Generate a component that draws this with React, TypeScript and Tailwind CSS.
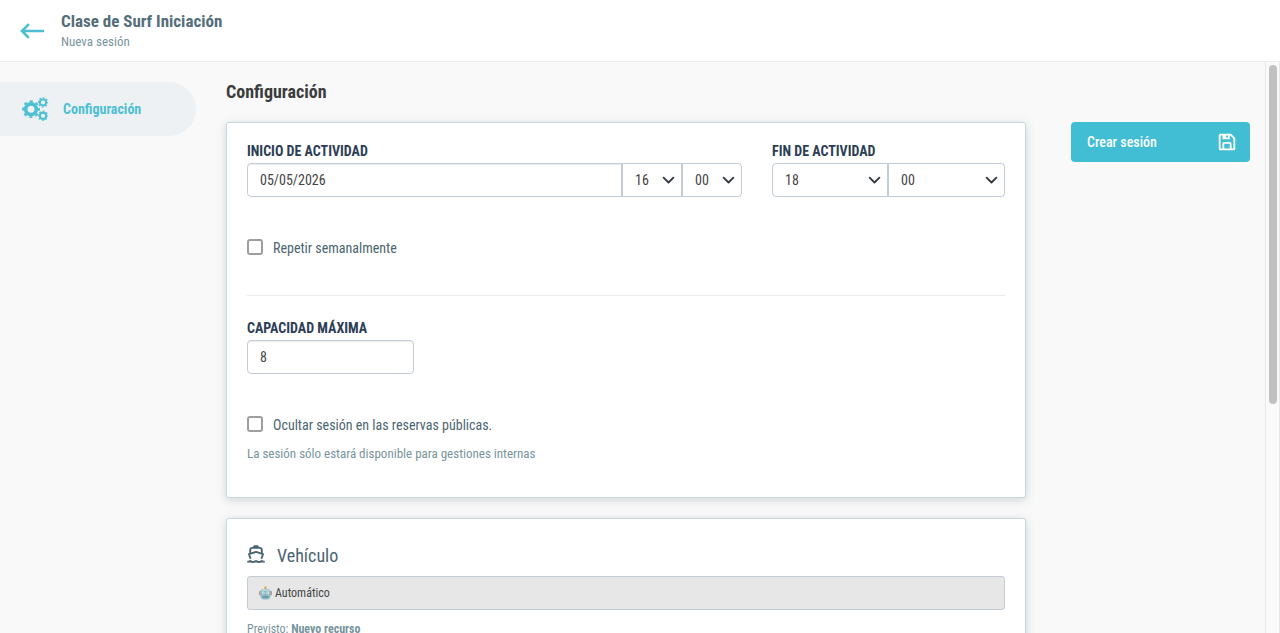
import type { ReactNode } from 'react'
import { BiSave } from 'react-icons/bi'

function ArrowLeft() {
  return (
    <svg width="24" height="16" viewBox="0 0 24 16" fill="none" stroke="#4dbfd3" strokeWidth="2.6">
      <path d="M24 8H2M8.8 1.2 2 8l6.8 6.8" />
    </svg>
  )
}

// Ring plus dashed outer circle; each dash is a tooth
function Gear({ cx, cy, r, hole, teeth }: { cx: number; cy: number; r: number; hole: number; teeth: number }) {
  const body = r * 0.78
  const tooth = (r + body) / 2
  const step = (Math.PI * 2 * tooth) / teeth
  return (
    <g fill="none" stroke="currentColor">
      <circle cx={cx} cy={cy} r={(body + hole) / 2} strokeWidth={body - hole + 0.3} />
      <circle
        cx={cx}
        cy={cy}
        r={tooth}
        strokeWidth={r - body}
        strokeDasharray={`${step * 0.5} ${step * 0.5}`}
        strokeDashoffset={step * 0.25}
      />
    </g>
  )
}

function Cogs() {
  return (
    <svg width="27" height="25" viewBox="0 0 27 25">
      <Gear cx={9} cy={12.2} r={8.9} hole={3.7} teeth={8} />
      <Gear cx={21} cy={5.4} r={5.2} hole={2.3} teeth={8} />
      <Gear cx={21} cy={18.8} r={5.2} hole={2.3} teeth={8} />
    </svg>
  )
}

function Boat() {
  return (
    <svg width="18" height="18" viewBox="0 0 18 18" fill="none" stroke="currentColor" strokeWidth="1.9">
      <path d="M6.4 2.4 7.3.9h3.4l.9 1.5" fill="currentColor" strokeWidth="1.2" />
      <path d="M3.2 8V5c0-1.2.9-2.1 2.1-2.1h7.4c1.2 0 2.1.9 2.1 2.1v3" />
      <path d="M3.6 13.8 2 9.2l7-2.3 7 2.3-1.6 4.6" strokeLinejoin="round" />
      <path d="M.3 16.8c1.3 0 2-.2 2.9-.8 1.6 1.1 4.2 1.1 5.8 0 1.6 1.1 4.2 1.1 5.8 0 .9.6 1.6.8 2.9.8" />
    </svg>
  )
}

function Robot() {
  return (
    <svg width="13" height="14" viewBox="0 0 13 14">
      <rect x="0" y="5" width="2.4" height="4.2" rx="1" fill="#c98f86" />
      <rect x="10.6" y="5" width="2.4" height="4.2" rx="1" fill="#c98f86" />
      <circle cx="6.5" cy="1.2" r="1.1" fill="#eeb04e" />
      <path d="M4.6 3.2 5.6 2h1.8l1 1.2z" fill="#a3adb0" />
      <path d="M1.2 5.2C1.6 3.7 3 2.9 4.4 2.9h4.2c1.4 0 2.8.8 3.2 2.3v4c0 2.5-1.6 4.2-3.8 4.2H5c-2.2 0-3.8-1.7-3.8-4.2z" fill="#8fbdc5" />
      <path d="M1.4 4.9C1.9 3.6 3 2.9 4.4 2.9h4.2c1.4 0 2.5.7 3 2z" fill="#bccfd2" />
      <circle cx="4.2" cy="6.9" r="1.4" fill="#e3f2f4" />
      <circle cx="8.8" cy="6.9" r="1.4" fill="#e3f2f4" />
      <circle cx="4.2" cy="6.9" r="0.6" fill="#5ba5b2" />
      <circle cx="8.8" cy="6.9" r="0.6" fill="#5ba5b2" />
      <path d="m6.5 7.6.6 1.1H5.9z" fill="#c98077" />
      <rect x="3.5" y="10.2" width="6" height="1.6" rx="0.8" fill="#5f909b" />
    </svg>
  )
}

function Label({ children }: { children: ReactNode }) {
  return <div className="h-6 text-sm leading-6 font-bold text-[#2c3e55] uppercase">{children}</div>
}

function Select({ value, className }: { value: string; className: string }) {
  return (
    <div
      className={`flex h-[34px] items-center justify-between border border-[#c3ccd6] bg-white pr-1.5 pl-3 text-sm text-[#444] ${className}`}
    >
      <span>{value}</span>
      <svg width="13" height="13" viewBox="0 0 16 16" fill="none" stroke="#343a40" strokeWidth="2.3">
        <path d="m2 4.5 6 6 6-6" strokeLinecap="round" strokeLinejoin="round" />
      </svg>
    </div>
  )
}

function Checkbox({ label }: { label: string }) {
  return (
    <label className="flex items-center gap-2.5 text-sm text-[#4b6570]">
      <span className="size-4 rounded-[3px] border-2 border-[#9e9e9e] bg-white" />
      <span className="relative top-px">{label}</span>
    </label>
  )
}

function Card({ children, className = '' }: { children: ReactNode; className?: string }) {
  return (
    <section
      className={`w-[800px] shrink-0 rounded-[3px] border border-[#cbd5e0] bg-white px-5 shadow-[0_2px_10px_rgba(84,110,110,0.25)] ${className}`}
    >
      {children}
    </section>
  )
}

export default function App() {
  return (
    <div className="flex h-[633px] w-[1280px] flex-col overflow-hidden bg-[#f9f9f9] font-['Roboto_Condensed',Roboto,sans-serif] font-stretch-condensed">
      <header className="flex h-[62px] shrink-0 items-center border-b border-[#ececec] bg-white pl-5">
        <ArrowLeft />
        <div className="ml-[17px]">
          <h1 className="-mt-px mb-px text-[17px] leading-[22px] font-bold text-[#546e7a]">Clase de Surf Iniciación</h1>
          <p className="text-[13px] leading-[18px] text-[#78949c]">Nueva sesión</p>
        </div>
      </header>

      <div className="flex min-h-0 flex-1">
        <aside className="w-[196px] shrink-0 pt-5">
          <div className="flex h-[54px] items-center rounded-r-full bg-[#edf1f4] pl-[22px] text-[#4dbfd3]">
            <Cogs />
            <span className="ml-3.5 text-sm font-bold">Configuración</span>
          </div>
        </aside>

        <main className="ml-[30px] flex w-[800px] flex-col pt-[17px]">
          <h2 className="mb-[17px] text-lg leading-[26px] font-bold text-[#3c3c3c]">Configuración</h2>

          <Card className="h-[376px] pt-4">
            <div className="flex gap-[30px]">
              <div className="w-[495px]">
                <Label>Inicio de actividad</Label>
                <div className="flex">
                  <div className="flex h-[34px] w-[375px] items-center rounded-l-[4px] border border-[#c3ccd6] pl-3 text-sm text-[#444] shadow-[inset_0_1px_1px_rgba(0,0,0,0.075)]">
                    05/05/2026
                  </div>
                  <Select value="16" className="w-[60px]" />
                  <Select value="00" className="w-[60px] rounded-r-[4px]" />
                </div>
              </div>
              <div className="w-[233px]">
                <Label>Fin de actividad</Label>
                <div className="flex">
                  <Select value="18" className="w-[116px] rounded-l-[4px]" />
                  <Select value="00" className="w-[117px] rounded-r-[4px]" />
                </div>
              </div>
            </div>

            <div className="mt-10">
              <Checkbox label="Repetir semanalmente" />
            </div>

            <hr className="mt-[38px] mb-5 border-[#ebebeb]" />

            <Label>Capacidad máxima</Label>
            <div className="flex h-[34px] w-[167px] items-center rounded-[4px] border border-[#c3ccd6] pl-3 text-sm text-[#444] shadow-[inset_0_1px_1px_rgba(0,0,0,0.075)]">
              8
            </div>

            <div className="mt-10">
              <Checkbox label="Ocultar sesión en las reservas públicas." />
            </div>
            <p className="mt-[11px] text-[13px] leading-[18px] text-[#78949c]">
              La sesión sólo estará disponible para gestiones internas
            </p>
          </Card>

          <Card className="mt-5 h-[220px] pt-[23px]">
            <h3 className="flex items-center text-lg leading-[28px] text-[#4b6570]">
              <span className="relative -top-0.5 mr-3">
                <Boat />
              </span>
              Vehículo
            </h3>
            <div className="mt-1.5 flex h-[34px] items-center gap-[3px] rounded-[3px] border border-[#c3ccd6] bg-[#e7e7e7] pl-[11px] text-xs text-[#444]">
              <Robot />
              Automático
            </div>
            <p className="mt-2.5 text-xs leading-[18px] text-[#78949c]">
              Previsto: <b>Nuevo recurso</b>
            </p>
          </Card>
        </main>

        <div className="ml-[45px] w-[179px] pt-[60px]">
          <button className="flex h-10 w-full items-center justify-between rounded-[4px] bg-[#41bed4] pr-3 pl-4 text-sm font-medium text-white">
            Crear sesión
            <BiSave size={22} />
          </button>
        </div>

        <div className="ml-[15px] w-[15px] border-x border-[#e8e8e8] bg-[#fafafa] pt-[3px] pl-[3px]">
          <div className="h-[339px] w-2 rounded-full bg-[#c1c1c1]" />
        </div>
      </div>
    </div>
  )
}
